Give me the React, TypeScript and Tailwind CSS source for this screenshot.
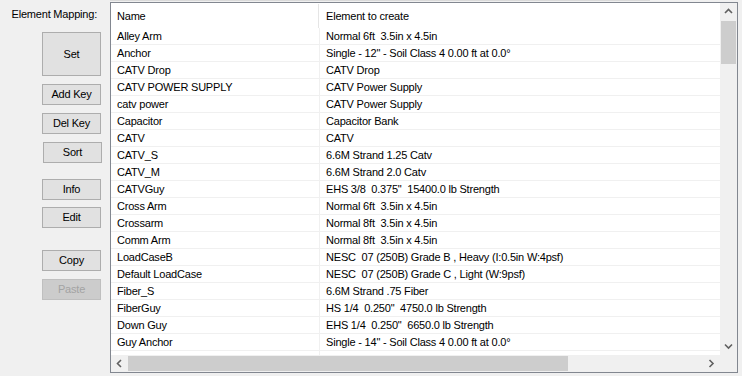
import React from "react";

const rows: [string, string][] = [
  ["Alley Arm", "Normal 6ft  3.5in x 4.5in"],
  ["Anchor", "Single - 12\" - Soil Class 4 0.00 ft at 0.0°"],
  ["CATV Drop", "CATV Drop"],
  ["CATV POWER SUPPLY", "CATV Power Supply"],
  ["catv power", "CATV Power Supply"],
  ["Capacitor", "Capacitor Bank"],
  ["CATV", "CATV"],
  ["CATV_S", "6.6M Strand 1.25 Catv"],
  ["CATV_M", "6.6M Strand 2.0 Catv"],
  ["CATVGuy", "EHS 3/8  0.375\"  15400.0 lb Strength"],
  ["Cross Arm", "Normal 6ft  3.5in x 4.5in"],
  ["Crossarm", "Normal 8ft  3.5in x 4.5in"],
  ["Comm Arm", "Normal 8ft  3.5in x 4.5in"],
  ["LoadCaseB", "NESC  07 (250B) Grade B , Heavy (I:0.5in W:4psf)"],
  ["Default LoadCase", "NESC  07 (250B) Grade C , Light (W:9psf)"],
  ["Fiber_S", "6.6M Strand .75 Fiber"],
  ["FiberGuy", "HS 1/4  0.250\"  4750.0 lb Strength"],
  ["Down Guy", "EHS 1/4  0.250\"  6650.0 lb Strength"],
  ["Guy Anchor", "Single - 14\" - Soil Class 4 0.00 ft at 0.0°"],
];

const Chevron = ({ dir }: { dir: "up" | "down" | "left" | "right" }) => {
  const d = {
    up: "M1 5 L4.5 1.5 L8 5",
    down: "M1 1.5 L4.5 5 L8 1.5",
    left: "M5 1 L1.5 4.5 L5 8",
    right: "M1.5 1 L5 4.5 L1.5 8",
  }[dir];
  const vertical = dir === "up" || dir === "down";
  return (
    <svg
      width={vertical ? 9 : 7}
      height={vertical ? 7 : 9}
      viewBox={vertical ? "0 0 9 7" : "0 0 7 9"}
    >
      <path d={d} fill="none" stroke="#606060" strokeWidth="1.6" />
    </svg>
  );
};

const Btn = ({
  label,
  className,
  disabled,
}: {
  label: string;
  className: string;
  disabled?: boolean;
}) => (
  <button
    disabled={disabled}
    className={
      "w-[59px] flex items-center justify-center border " +
      (disabled
        ? "bg-[#cccccc] border-[#bfbfbf] text-[#a3a3a3] "
        : "bg-[#e1e1e1] border-[#adadad] text-black ") +
      className
    }
  >
    {label}
  </button>
);

export default function App() {
  return (
    <div className="w-[742px] h-[376px] bg-[#f0f0f0] flex overflow-hidden text-[11px] tracking-[-0.2px] text-black font-['Liberation_Sans',Arial,sans-serif]">
      {/* Left side buttons */}
      <div className="w-[110px] shrink-0 flex flex-col">
        <div className="pt-[6px] pr-[13px] text-right leading-[16px]">Element Mapping:</div>
        <Btn label="Set" className="mt-[10px] ml-[42px] h-[44px]" />
        <Btn label="Add Key" className="mt-[8px] ml-[42px] h-[21px]" />
        <Btn label="Del Key" className="mt-[8px] ml-[42px] h-[21px]" />
        <Btn label="Sort" className="mt-[8px] ml-[43px] h-[21px]" />
        <Btn label="Info" className="mt-[16px] ml-[42px] h-[21px]" />
        <Btn label="Edit" className="mt-[7px] ml-[42px] h-[21px]" />
        <Btn label="Copy" className="mt-[22px] ml-[42px] h-[21px]" />
        <Btn label="Paste" className="mt-[8px] ml-[42px] h-[21px]" disabled />
      </div>

      {/* List view */}
      <div className="flex flex-col">
        <div className="h-px w-[540px] bg-[#dadada]" />
        <div className="mt-px w-[628px] h-[371px] border border-[#828790] bg-white flex flex-col">
          <div className="flex h-[352px]">
            <div className="flex-1 overflow-hidden">
              <div className="flex h-[25px]">
                <div className="w-[208px] shrink-0 pl-[6px] pt-px flex items-center border-r border-[#e5e5e5] mt-px">
                  Name
                </div>
                <div className="pl-[7px] pt-px flex items-center">Element to create</div>
              </div>
              {rows.map(([name, el], i) => (
                <div key={i} className="flex h-[17px] border-b border-[#f0f0f0] whitespace-pre">
                  <div className="w-[208px] shrink-0 pl-[6px] flex items-center">{name}</div>
                  <div className="flex-1 border-l border-[#f0f0f0] pl-[6px] flex items-center">
                    {el}
                  </div>
                </div>
              ))}
              <div className="flex h-[17px]">
                <div className="w-[208px] shrink-0" />
                <div className="flex-1 border-l border-[#f0f0f0]" />
              </div>
            </div>
            <div className="w-[17px] shrink-0 bg-[#f0f0f0] flex flex-col">
              <div className="h-[17px] flex items-center justify-center">
                <Chevron dir="up" />
              </div>
              <div className="mt-px mx-px h-[43px] bg-[#cdcdcd]" />
              <div className="mt-auto h-[17px] flex items-center justify-center">
                <Chevron dir="down" />
              </div>
            </div>
          </div>
          <div className="flex h-[17px] bg-[#f0f0f0]">
            <div className="w-[17px] flex items-center justify-center">
              <Chevron dir="left" />
            </div>
            <div className="flex-1 flex items-center">
              <div className="h-[15px] w-[440px] bg-[#cdcdcd]" />
            </div>
            <div className="w-[17px] flex items-center justify-center">
              <Chevron dir="right" />
            </div>
            <div className="w-[17px]" />
          </div>
        </div>
      </div>
    </div>
  );
}
